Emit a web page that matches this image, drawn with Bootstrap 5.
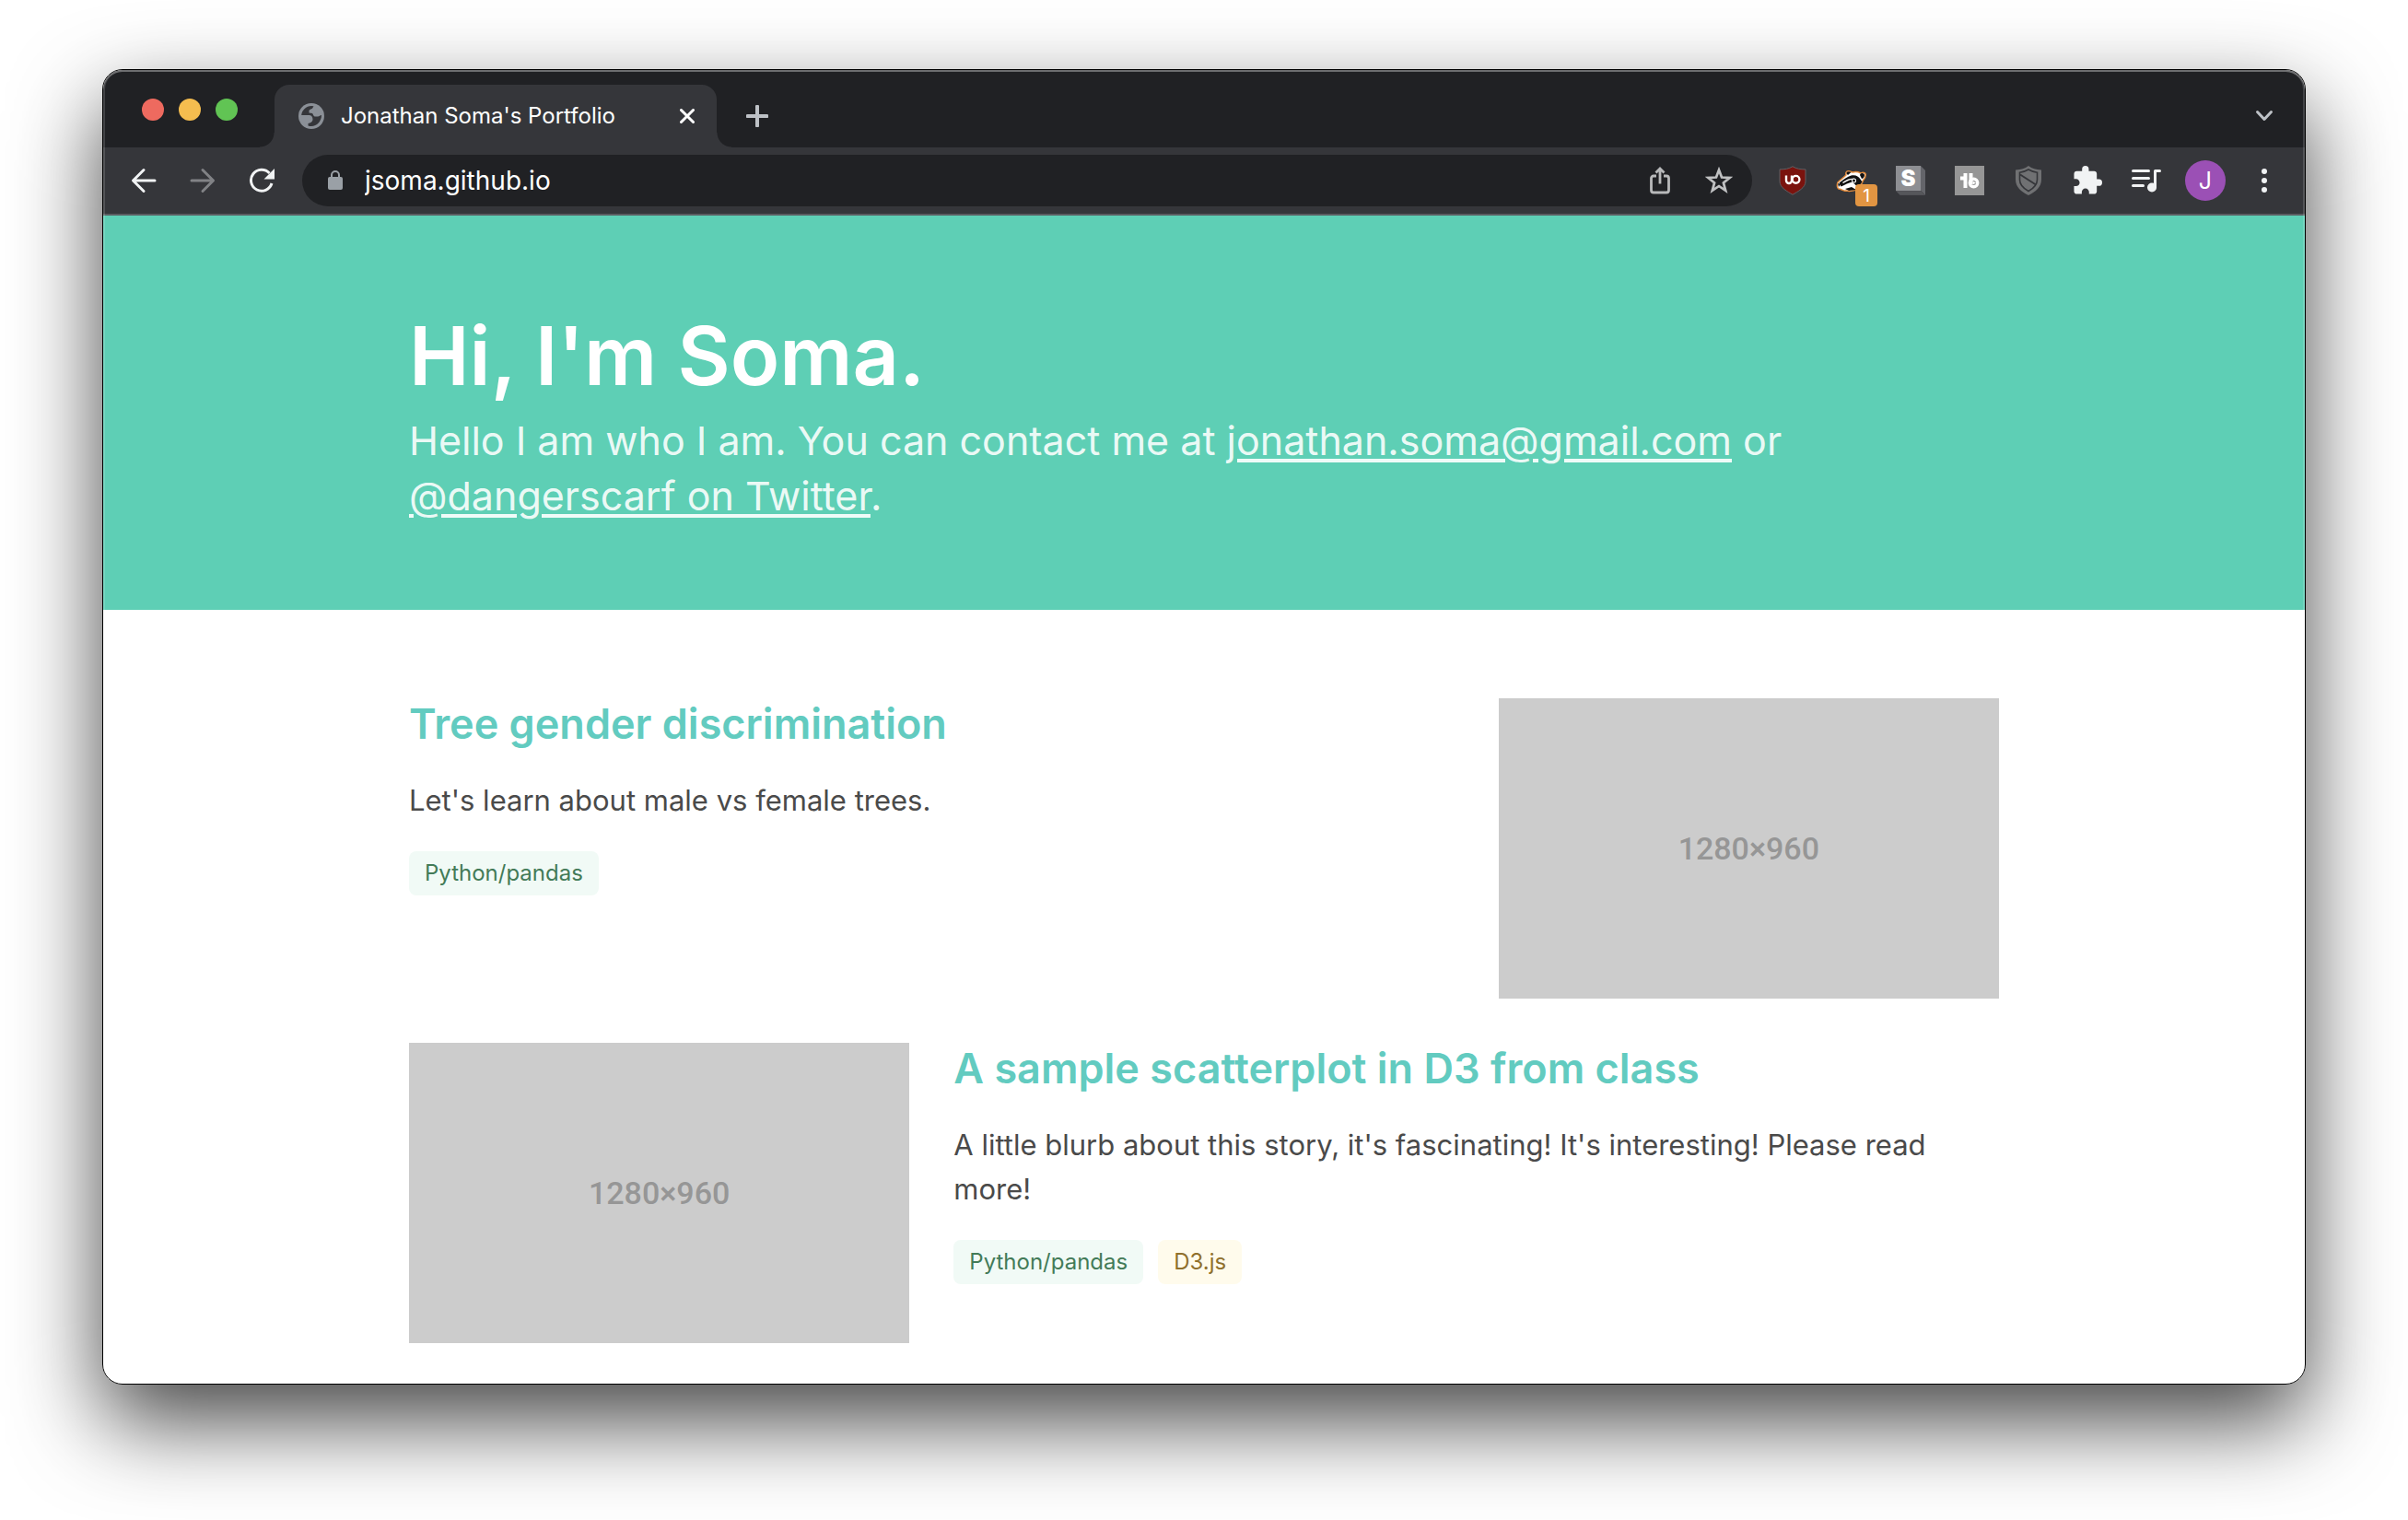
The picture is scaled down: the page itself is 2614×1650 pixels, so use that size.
<!DOCTYPE html>
<html lang="en">
<head>
<meta charset="utf-8">
<meta name="viewport" content="width=device-width, initial-scale=1">
<title>Jonathan Soma's Portfolio</title>
<link rel="stylesheet" href="https://cdn.jsdelivr.net/npm/bootstrap@5.3.0/dist/css/bootstrap.min.css">
<style>
  body { font-family: Inter, "Liberation Sans", sans-serif; padding: 75px 111px; background: #fff; color: #4a4a4a; min-height: 100vh; }
  svg { display: block; flex: none; }

  /* browser window */
  .window { border: 1px solid #000; border-radius: 22px; overflow: hidden; background: #fff; }
  .window-wrap { border-radius: 22px; box-shadow: 0 40px 96px rgba(0,0,0,.73); }
  .window-wrap::after { content: ""; position: absolute; inset: 1px; border-radius: 21px; pointer-events: none;
    box-shadow: inset 0 2px 0 rgba(255,255,255,.22), inset 0 0 0 2px rgba(255,255,255,.16); }
  .icon-btn { border: 0; background: none; padding: 0; display: flex; align-items: center; justify-content: center; width: 64px; height: 56px; flex: none; }

  /* tab strip */
  .strip { background: #202124; height: 84px; padding: 0 12px 0 42px; }
  .lights { gap: 16px; margin-right: 40px; padding-top: 2px; }
  .light { width: 24px; height: 24px; border: 0; padding: 0; border-radius: 50%; }
  .light-close { background: #ee6a5f; }
  .light-min { background: #f5bd4f; }
  .light-max { background: #61c454; }
  .tab-open { background: #35363a; width: 480px; height: 68px; border-radius: 16px 16px 0 0; padding: 0 24px 0 26px; }
  .tab-open::before, .tab-open::after { content: ""; position: absolute; bottom: 0; width: 16px; height: 16px; }
  .tab-open::before { right: 100%; background: radial-gradient(circle at 0 0, #202124 15px, #35363a 16px); }
  .tab-open::after { left: 100%; background: radial-gradient(circle at 100% 0, #202124 15px, #35363a 16px); }
  .tab-label { color: #fff; font-size: 24px; line-height: 32px; margin-left: 18px; }
  .tab-close { border: 0; background: none; padding: 0; }
  .new-tab { width: 64px; height: 68px; margin-left: 12px; }

  /* toolbar */
  .toolbar { background: #35363a; height: 74px; padding: 0 12px; border-bottom: 2px solid #5a5d61; }
  .omnibox { background: #202124; height: 56px; border-radius: 28px; margin: 0 12px; padding: 0 4px 0 28px; }
  .address { background: none; border: 0; outline: 0; color: #fff; font-size: 28px; line-height: 40px; padding: 0 0 0 8px; margin-left: 16px; min-width: 0; }
  .ext-count { right: 4px; bottom: 0; width: 24px; height: 24px; border-radius: 4px; background: #e29542; color: #fff; font-size: 19px; line-height: 25px; }
  .avatar { width: 44px; height: 44px; border-radius: 50%; background: #9b50b5; color: #fff; font-size: 25px; line-height: 44px; }

  /* page */
  .page-box { max-width: 1774px; padding: 0 24px; }
  .intro { background: #5ecfb5; padding: 98px 0 94px; }
  .intro h1 { color: #fff; font-size: 88px; line-height: 108px; font-weight: 600; margin: 0; }
  .intro p { color: rgba(255,255,255,.9); font-size: 43px; line-height: 60px; margin: 8px 0 0; }
  .intro a { color: inherit; text-decoration-thickness: 4px; text-underline-offset: 4px; }
  .stories { padding: 96px 0 44px; }
  .story { --bs-gutter-x: 48px; }
  .story + .story { margin-top: 48px; }
  .story h2 { font-size: 45px; line-height: 56px; font-weight: 600; margin: 0 0 31px; }
  .story h2 a { color: #62cbc0; text-decoration: none; }
  .story p { font-size: 31px; line-height: 48px; margin: 0 0 31px; }
  .topic { font-size: 24px; line-height: 48px; border-radius: 8px; padding: 0 17px; }
  .topic-py { background: #f1faf6; color: #437b58; }
  .topic-d3 { background: #fffbec; color: #90702c; }
  .thumb { aspect-ratio: 5 / 3; background: #ccc; color: #969696; font-family: Roboto, "Liberation Sans", sans-serif; font-weight: 500; font-size: 34px; line-height: 48px; }
</style>
<script src="https://cdn.jsdelivr.net/npm/bootstrap@5.3.0/dist/js/bootstrap.bundle.min.js"></script>
</head>
<body>
<div class="window-wrap position-relative">
<div class="window">
  <div class="strip d-flex align-items-end">
    <div class="lights d-flex align-items-center align-self-center">
      <button class="light light-close" aria-label="Close window"></button>
      <button class="light light-min" aria-label="Minimize window"></button>
      <button class="light light-max" aria-label="Zoom window"></button>
    </div>
    <div class="tab-open position-relative d-flex align-items-center">
      <svg width="28" height="28" viewBox="0 0 28 28"><circle cx="14" cy="14" r="14" fill="#8b9097"/><path fill="#35363a" d="M3.200 13C3.700 7.500 8.500 3 14 3l2.500.3-1 1.700c-.5 1.500-4 1.500-4 3.500v2l3.500.5c1 .5 1 3 2.500 3.500h3.500c1.500 0 2.500-1.500 4-1.500C25 19.500 20 25 14 25c-1.500 0-2.500-.2-3.500-.6v-2.400l2.500-.8c1.500-.6 2.500-2 2.500-3.700 0-2.500-1.500-4.500-4-4.500z"/></svg>
      <span class="tab-label flex-grow-1 text-nowrap">Jonathan Soma's Portfolio</span>
      <button class="tab-close" aria-label="Close tab"><svg width="16" height="16" viewBox="0 0 16 16"><path d="M1.500 1.500l13 13M14.500 1.500l-13 13" stroke="#fff" stroke-width="3" stroke-linecap="round"/></svg></button>
    </div>
    <button class="icon-btn new-tab" aria-label="New tab"><svg width="24" height="24" viewBox="0 0 24 24"><path d="M12 1.500v21M1.500 12h21" stroke="#bdc1c6" stroke-width="4" stroke-linecap="round"/></svg></button>
    <button class="icon-btn new-tab ms-auto" aria-label="Search tabs"><svg width="20" height="14" viewBox="0 0 20 14"><path d="M2.500 2.500l7.500 8 7.500-8" fill="none" stroke="#bdc1c6" stroke-width="3" stroke-linecap="round" stroke-linejoin="round"/></svg></button>
  </div>

  <div class="toolbar d-flex align-items-center">
    <button class="icon-btn" aria-label="Back"><svg width="28" height="28" viewBox="0 0 28 28"><path d="M26 14H3M14 2.500L2.500 14 14 25.500" fill="none" stroke="#f1f3f4" stroke-width="3" stroke-linecap="round" stroke-linejoin="round"/></svg></button>
    <button class="icon-btn" aria-label="Forward"><svg width="28" height="28" viewBox="0 0 28 28"><path d="M2 14h23M14 2.500L25.500 14 14 25.500" fill="none" stroke="#818285" stroke-width="3" stroke-linecap="round" stroke-linejoin="round"/></svg></button>
    <button class="icon-btn" aria-label="Reload"><svg width="28" height="28" viewBox="0 0 28 28"><path d="M22.500 6A11.500 11.500 0 1 0 25 17" fill="none" stroke="#f1f3f4" stroke-width="3"/><path d="M28 1v11.500H16.500z" fill="#f1f3f4"/></svg></button>
    <div class="omnibox d-flex align-items-center flex-grow-1">
      <svg width="16" height="22" viewBox="0 0 16 22"><rect y="7" width="16" height="14" rx="2" fill="#9aa0a6"/><path d="M4 8V5a4 4 0 0 1 8 0v3" fill="none" stroke="#9aa0a6" stroke-width="2"/></svg>
      <input class="address flex-grow-1" type="text" aria-label="Address" value="jsoma.github.io">
      <button class="icon-btn" aria-label="Share"><svg width="24" height="30" viewBox="0 0 24 30"><path d="M8 10H5a2.500 2.500 0 0 0-2.500 2.500v13A2.500 2.500 0 0 0 5 28h14a2.500 2.500 0 0 0 2.500-2.500v-13A2.500 2.500 0 0 0 19 10h-3M12 18.500V3M7.500 6.500L12 2l4.500 4.500" fill="none" stroke="#b8b9ba" stroke-width="2.800"/></svg></button>
      <button class="icon-btn" aria-label="Bookmark"><svg width="30" height="30" viewBox="0 0 30 30"><path d="M15 3.500l3 8 8.600.5-6.700 5.400 2.300 8.400L15 21l-7.200 4.800 2.300-8.400L3.400 12l8.600-.5z" fill="none" stroke="#c0c1c2" stroke-width="2.700"/></svg></button>
    </div>
    <button class="icon-btn" aria-label="uBlock Origin"><svg width="30" height="32" viewBox="0 0 30 32"><path d="M15 .7c4 2.500 8.500 3.200 14 3.200v13c0 7-8.500 11-14 14.400C9.500 27.900 1 23.900 1 16.900v-13c5.500 0 10-.7 14-3.200z" fill="#7a130e" stroke="#5e6064" stroke-width="1"/><path d="M8 10.500v5.500a3 3 0 0 0 6 0v-5.500" fill="none" stroke="#fff" stroke-width="2.400"/><circle cx="18.500" cy="14.800" r="3.900" fill="none" stroke="#fff" stroke-width="2.400"/></svg></button>
    <button class="icon-btn position-relative" aria-label="Privacy Badger, 1 tracker">
      <svg width="34" height="28" viewBox="0 0 34 28"><path d="M2 16c3-3 6-5 9-8-1-3 1-5 4-4l3 1c4-1 7 0 9 1 3-2 6 0 5 3 0 3-3 4-3 6l-4 8c-5 2-10 3-14 2-3 1-5-2-8-2-2-1-2-5-1-7z" fill="#fff" stroke="#e58b3a" stroke-width="1.500"/><path d="M3.500 16.500c5-4 9-6.500 13-8 5-1 8 1 10 4l2 3-4 5c-3 0-4-4-7-4.500-4 0-7 2.500-12 4.500z" fill="#111"/><path d="M11.500 6.500c0-2.500 2-3 5-1.500l-3.500 3zM26 8c1-3 5-2 5 0s-1.500 4-3 4zM2 17l3 1-2 3zM10 23l7-2 5 3-8 1z" fill="#111"/><path d="M7 16c5-3.500 9-5 14-4-5 .5-9 2.500-13 5z" fill="#fff"/><circle cx="19.500" cy="14" r="2.600" fill="#fff"/><circle cx="19.500" cy="14" r="1.500" fill="#111"/></svg>
      <span class="ext-count position-absolute">1</span></button>
    <button class="icon-btn" aria-label="Extension S"><svg width="32" height="32" viewBox="0 0 32 32"><path d="M27 0l5 5v27H5l-5-5z" fill="#64656a"/><path d="M27 27l5 5M0 27l5 5h27l-5-5z" fill="#56575b" stroke="#4b4c50" stroke-width=".7"/><path d="M0 0h27v27H0z" fill="#8e8f93"/><text x="13.500" y="22" text-anchor="middle" font-family="Inter" font-weight="900" font-size="24" fill="#fff">S</text></svg></button>
    <button class="icon-btn" aria-label="TubeBuddy"><svg width="32" height="32" viewBox="0 0 32 32"><path d="M0 0h32v32H0z" fill="#969696"/><path d="M11.500 8v16M6 13.500h7M17.500 8v12" fill="none" stroke="#fff" stroke-width="4"/><circle cx="20.500" cy="18.500" r="4.200" fill="none" stroke="#fff" stroke-width="3.400"/><path d="M19.500 16.500v4l3.500-2z" fill="#fff"/></svg></button>
    <button class="icon-btn" aria-label="Shield extension"><svg width="28" height="32" viewBox="0 0 28 32"><path d="M14 0c4 3 8 4 14 4.500V15c0 8-6 13-14 17C6 28 0 23 0 15V4.500C6 4 10 3 14 0z" fill="#707173"/><path d="M14 4c3.500 2 6 3 9.500 3.300V15c0 5-4 9.500-9.500 12.500C8.500 24.500 4.500 20 4.500 15V7.300C8 7 10.500 6 14 4z" fill="#707173" stroke="#35363a" stroke-width="1.600"/><path d="M5 9.500l17 11" stroke="#35363a" stroke-width="2"/></svg></button>
    <button class="icon-btn" aria-label="Extensions"><svg width="32" height="32" viewBox="1 1 22 22"><path fill="#f1f3f4" d="M20.500 11H19V7c0-1.100-.9-2-2-2h-4V3.500a2.500 2.500 0 0 0-5 0V5H4c-1.100 0-1.990.9-1.990 2v3.800H3.500c1.490 0 2.700 1.210 2.700 2.700s-1.210 2.700-2.700 2.700H2V20c0 1.100.9 2 2 2h3.800v-1.500c0-1.490 1.210-2.700 2.700-2.700s2.700 1.210 2.700 2.700V22H17c1.100 0 2-.9 2-2v-4h1.500a2.500 2.500 0 0 0 0-5z"/></svg></button>
    <button class="icon-btn" aria-label="Media controls"><svg width="32" height="26" viewBox="0 0 32 26"><path d="M1.500 2.500h17M1.500 10.500h17M1.500 18.500h11" stroke="#f1f3f4" stroke-width="3" stroke-linecap="round"/><path d="M25.500 20V2.500h5" fill="none" stroke="#f1f3f4" stroke-width="3" stroke-linecap="round" stroke-linejoin="round"/><circle cx="22" cy="20.500" r="5" fill="#f1f3f4"/></svg></button>
    <button class="icon-btn" aria-label="Profile"><span class="avatar">J</span></button>
    <button class="icon-btn" aria-label="Menu"><svg width="6" height="26" viewBox="0 0 6 26"><g fill="#f1f3f4"><circle cx="3" cy="3" r="3"/><circle cx="3" cy="13" r="3"/><circle cx="3" cy="23" r="3"/></g></svg></button>
  </div>

  <header class="intro">
    <div class="page-box container-fluid">
      <h1>Hi, I'm Soma.</h1>
      <p>Hello I am who I am. You can contact me at <a href="mailto:jonathan.soma@gmail.com">jonathan.soma@gmail.com</a> or <a href="#">@dangerscarf on Twitter</a>.</p>
    </div>
  </header>

  <main class="stories">
    <div class="page-box container-fluid">
      <article class="row story">
        <div class="col-8">
          <h2><a href="#">Tree gender discrimination</a></h2>
          <p>Let's learn about male vs female trees.</p>
          <div class="d-flex gap-3"><span class="topic topic-py">Python/pandas</span></div>
        </div>
        <div class="col-4"><div class="thumb d-flex align-items-center justify-content-center">1280×960</div></div>
      </article>
      <article class="row story">
        <div class="col-4"><div class="thumb d-flex align-items-center justify-content-center">1280×960</div></div>
        <div class="col-8">
          <h2><a href="#">A sample scatterplot in D3 from class</a></h2>
          <p>A little blurb about this story, it's fascinating! It's interesting! Please read more!</p>
          <div class="d-flex gap-3"><span class="topic topic-py">Python/pandas</span><span class="topic topic-d3">D3.js</span></div>
        </div>
      </article>
    </div>
  </main>
</div>
</div>
</body>
</html>
